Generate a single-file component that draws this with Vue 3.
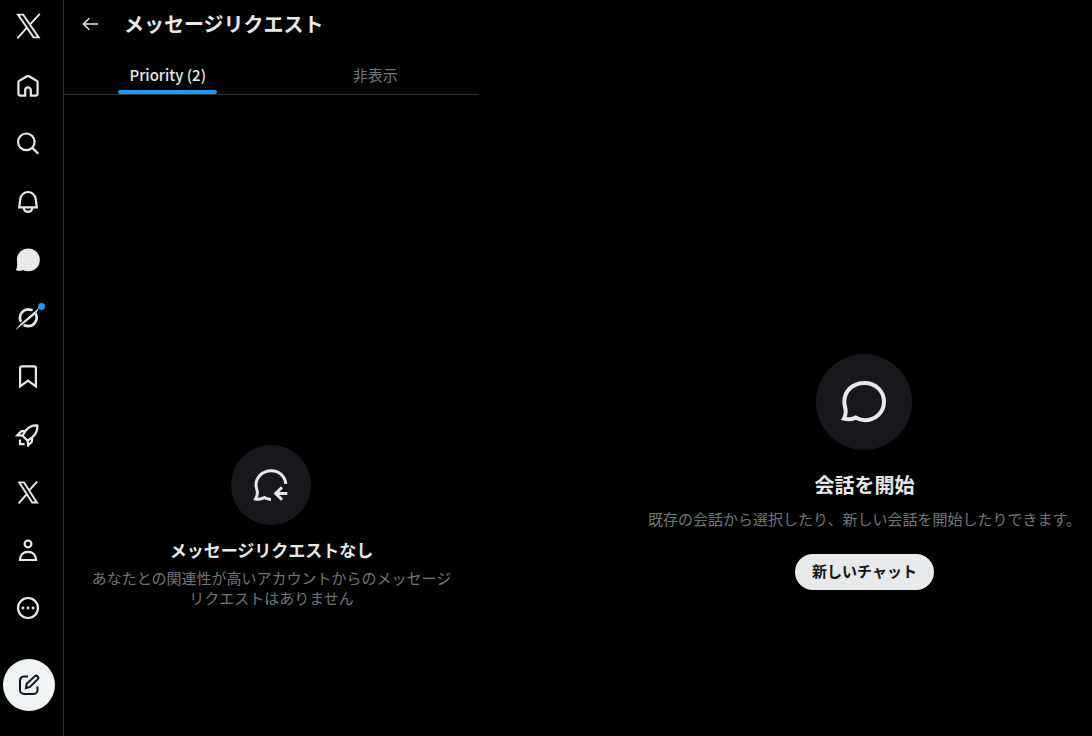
<script setup>
import { ref } from 'vue';

// Sidebar links, top to bottom. Icons share a 26x26 grid.
const navItems = [
  {
    id: 'home',
    label: 'ホーム',
    line: 'M10.2 22.6H5.4a2 2 0 0 1-2-2V9.4c0-.7.4-1.4 1-1.7L12 3.3a2 2 0 0 1 2 0l7.6 4.4c.6.3 1 1 1 1.7v11.2a2 2 0 0 1-2 2h-4.8v-5.4a2.8 2.8 0 0 0-5.6 0z',
  },
  {
    id: 'search',
    label: '検索',
    line: 'M11.3 2.5a8.3 8.3 0 1 0 0 16.6a8.3 8.3 0 0 0 0-16.6zM17.1 16.6l6.2 6.2',
  },
  {
    id: 'notifications',
    label: '通知',
    line: 'M4.2 18.4l1.1-8.5C5.8 6.1 9 3 13 3s7.2 3.1 7.7 6.9l1.1 8.5zM8.6 18.8c.4 2.3 2.2 4.1 4.4 4.1s4-1.8 4.4-4.1',
  },
  {
    id: 'messages',
    label: 'メッセージ',
    fill: 'M13.4 1.4C6.8 1.4 1.9 6.3 1.9 12.8c0 3.4 1.2 5.6-1 10.1 1.9 1.2 5.200 1.300 7.100.1 1.600.8 3.400 1.200 5.300 1.200 6.500 0 11.500-4.900 11.500-11.300S19.900 1.400 13.400 1.400z',
  },
  { id: 'grok', label: 'Grok', badge: true },
  {
    id: 'bookmarks',
    label: 'ブックマーク',
    line: 'M5.1 23.4V5c0-1 .7-1.7 1.7-1.7h12.4c1 0 1.7.7 1.7 1.7v18.4L13 17.7z',
  },
  {
    id: 'jobs',
    label: '求人',
    line: 'M22.4 4.5c-4.8-.3-9 1.7-11.9 5.3l-2.900 4.900 5 5 4.500-3.300C20.700 13.700 22.600 9.500 22.400 4.500zM10.400 9.800l-3.900.3L2.300 14.300l5.300.4M17.100 16.400l-.2 4.100-3.700 3.900-.6-4.700M5 18.500v4.600h4.600',
  },
  {
    id: 'premium',
    label: 'プレミアム',
    line: 'M4.3 3.400h4.700l12.900 20.100h-4.700zM22.100 2.600l-7.900 8.800M3.700 24.300l8.200-9.300',
    thin: true,
  },
  {
    id: 'profile',
    label: 'プロフィール',
    line: 'M13 3.500a3.400 3.400 0 1 0 0 6.800a3.400 3.400 0 0 0 0-6.800zM4.900 23c.1-5.200 3.300-8.200 8.100-8.200s8 3 8.100 8.200z',
  },
  { id: 'more', label: 'もっと見る', dots: true },
];

const tabs = [
  { id: 'priority', label: 'Priority (2)' },
  { id: 'hidden', label: '非表示' },
];

const activeNav = ref('messages');
const activeTab = ref('priority');
</script>

<template>
  <div class="app">
    <!-- Sidebar -->
    <header class="sidebar">
      <a href="#" class="logo" aria-label="X">
        <svg viewBox="0 0 28 28" class="icon-logo">
          <path class="line thin" d="M4 2.600h5.200l15.500 22.800h-5.200zM25.800 1.800l-9.900 10.800M3.400 26.300l9.900-11.200" />
        </svg>
      </a>
      <nav class="nav">
        <a
          v-for="item in navItems"
          :key="item.id"
          href="#"
          class="nav-link"
          :aria-label="item.label"
          :aria-current="activeNav === item.id ? 'page' : null"
          @click.prevent="activeNav = item.id"
        >
          <svg viewBox="0 0 26 26" class="icon">
            <path v-if="item.line" class="line" :class="{ thin: item.thin }" :d="item.line" />
            <path v-if="item.fill" class="solid" :d="item.fill" />
            <template v-if="item.id === 'grok'">
              <circle class="ring" cx="13.300" cy="12.800" r="8.400" />
              <path class="cut" d="M1 24.500L24.500 1.500" />
              <path class="solid" d="M.8 25.300C3 21.300 5 19.300 8.500 16.300L24 2.800C22.500 6.800 21 8.300 18.500 10.700L7.400 19.700C4.900 21.600 3.200 22.800.8 25.300z" />
            </template>
            <template v-if="item.dots">
              <circle class="line" cx="13" cy="13" r="10" />
              <circle class="solid" cx="8" cy="13" r="1.400" />
              <circle class="solid" cx="13" cy="13" r="1.400" />
              <circle class="solid" cx="18" cy="13" r="1.400" />
            </template>
          </svg>
          <span v-if="item.badge" class="badge"></span>
        </a>
      </nav>
      <button type="button" class="compose" aria-label="ポストする">
        <svg viewBox="0 0 24 24" class="icon-compose">
          <path d="M11 3.500H7A4 4 0 0 0 3 7.500v9.500a4 4 0 0 0 4 4h9.500a4 4 0 0 0 4-4v-3.500" />
          <path d="M9 15l.7-4.200 7.900-7.400a2.100 2.100 0 0 1 3 3L13 13.900z" />
        </svg>
      </button>
    </header>

    <!-- Message requests -->
    <section class="requests">
      <div class="title-bar">
        <button type="button" class="back" aria-label="戻る">
          <svg viewBox="0 0 20 20" class="icon-back">
            <path d="M18 10H3.800M9.300 4.200L3.500 10l5.800 5.800" />
          </svg>
        </button>
        <h1>メッセージリクエスト</h1>
      </div>
      <div class="tabs" role="tablist">
        <button
          v-for="tab in tabs"
          :key="tab.id"
          type="button"
          role="tab"
          class="tab"
          :class="{ active: activeTab === tab.id }"
          :aria-selected="activeTab === tab.id"
          @click="activeTab = tab.id"
        >
          <span class="tab-label">{{ tab.label }}</span>
        </button>
      </div>
      <div class="empty">
        <div class="circle">
          <svg viewBox="0 0 40 40" class="icon-request">
            <path d="M34.800 18.800C34 11.200 28 5.700 20.300 5.700 11.600 5.700 5 12 5 20.200c0 3.200 1.500 4.800 1.400 7.800-.1 2.200-.8 4-1.900 6 2.200.6 5.500.4 8.900-1.300 2.200 1 4.100 1.600 6.600 1.800M36.300 28.500H24.800M31 22.200l-6.300 6.300 6.300 6.300" />
          </svg>
        </div>
        <h2>メッセージリクエストなし</h2>
        <p>あなたとの関連性が高いアカウントからのメッセージリクエストはありません</p>
      </div>
    </section>

    <!-- Conversation pane -->
    <main class="conversation">
      <div class="circle large">
        <svg viewBox="0 0 48 48" class="icon-chat">
          <path d="M24.400 5C12.900 5 4.300 13 4.300 23.700c0 2.300.4 4.100.9 5.900 1 3.700.7 7.300-1.300 11.100 3.700 1.100 7.800.8 11.700-1.100 2.900 1.700 5.700 2.600 8.800 2.600C35.500 42.200 44 34.400 44 23.700S35.500 5 24.400 5z" />
        </svg>
      </div>
      <h2>会話を開始</h2>
      <p>既存の会話から選択したり、新しい会話を開始したりできます。</p>
      <button type="button" class="new-chat">新しいチャット</button>
    </main>
  </div>
</template>

<style>
body {
  margin: 0;
  background: #000;
}
</style>

<style scoped>
.app {
  display: flex;
  min-height: 100vh;
  background: #000;
  color: #e7e9ea;
  font-family: 'Noto Sans CJK JP', sans-serif;
  font-size: 15px;
  line-height: 20px;
}

h1,
h2,
p {
  margin: 0;
}

button {
  padding: 0;
  border: none;
  background: none;
  color: inherit;
  font: inherit;
  cursor: pointer;
}

svg {
  display: block;
  fill: none;
  stroke-width: 2;
}

/* Sidebar */
.sidebar {
  display: flex;
  flex: none;
  flex-direction: column;
  width: 63px;
  border-right: 1px solid #2f3336;
}

.logo {
  display: flex;
  align-items: center;
  justify-content: center;
  width: 56px;
  height: 52px;
}

.nav {
  display: flex;
  flex-direction: column;
  gap: 8px;
  padding-top: 9px;
}

.nav-link {
  position: relative;
  display: flex;
  align-items: center;
  justify-content: center;
  width: 56px;
  height: 50px;
}

.icon {
  width: 26px;
  height: 26px;
}

.icon-logo {
  width: 28px;
  height: 28px;
}

.line {
  stroke: #e7e9ea;
  stroke-width: 2.2;
}

.thin {
  stroke-width: 1.9;
}

.solid {
  fill: #e7e9ea;
}

.ring {
  stroke: #e7e9ea;
  stroke-width: 2.7;
}

.cut {
  stroke: #000;
  stroke-width: 4;
}

.badge {
  position: absolute;
  top: 10px;
  right: 11px;
  width: 7px;
  height: 7px;
  border-radius: 50%;
  background: #1d9bf0;
}

.compose {
  display: flex;
  align-items: center;
  justify-content: center;
  width: 52px;
  height: 52px;
  margin: 26px 0 24px 3px;
  border-radius: 50%;
  background: #eff3f4;
}

.icon-compose {
  width: 24px;
  height: 24px;
  stroke: #0f1419;
}

/* Message requests */
.requests {
  flex: none;
  width: 38%;
}

.title-bar {
  display: flex;
  align-items: center;
  gap: 24px;
  height: 48px;
  padding: 0 16px;
}

.icon-back {
  width: 20px;
  height: 20px;
  stroke: #e7e9ea;
  stroke-width: 1.6;
}

h1 {
  font-size: 20px;
  font-weight: 700;
  line-height: 24px;
}

.tabs {
  display: flex;
  height: 46px;
  border-bottom: 1px solid #2f3336;
}

.tab {
  display: flex;
  flex: 1;
  justify-content: center;
  color: #71767b;
}

.tab-label {
  position: relative;
  box-sizing: border-box;
  height: 46px;
  padding: 17px 11px 0;
}

.active {
  color: #e7e9ea;
  font-weight: 500;
}

.active .tab-label::after {
  content: '';
  position: absolute;
  right: 0;
  bottom: 0;
  left: 0;
  height: 4px;
  border-radius: 2px;
  background: #1d9bf0;
}

.empty {
  display: flex;
  flex-direction: column;
  align-items: center;
  padding: 350px 24px 0;
  text-align: center;
}

.circle {
  display: flex;
  align-items: center;
  justify-content: center;
  width: 80px;
  height: 80px;
  border-radius: 50%;
  background: #16181c;
}

.icon-request {
  width: 40px;
  height: 40px;
  stroke: #e7e9ea;
  stroke-width: 3;
}

p {
  color: #71767b;
}

.empty h2 {
  margin: 13px 0 6px;
  font-size: 17px;
  font-weight: 700;
  line-height: 24px;
}

/* Conversation pane */
.conversation {
  display: flex;
  flex: 1;
  flex-direction: column;
  align-items: center;
  padding: 354px 0 0 158px;
  text-align: center;
}

.large {
  width: 96px;
  height: 96px;
}

.icon-chat {
  width: 48px;
  height: 48px;
  stroke: #e7e9ea;
  stroke-width: 4;
}

.conversation h2 {
  margin: 23px 0 12px;
  font-size: 20px;
  font-weight: 700;
  line-height: 24px;
}

.conversation p {
  white-space: nowrap;
}

.new-chat {
  height: 36px;
  margin-top: 25px;
  padding: 0 17px 2px;
  border-radius: 18px;
  background: #e7e9ea;
  color: #0f1419;
  font-weight: 700;
}
</style>
